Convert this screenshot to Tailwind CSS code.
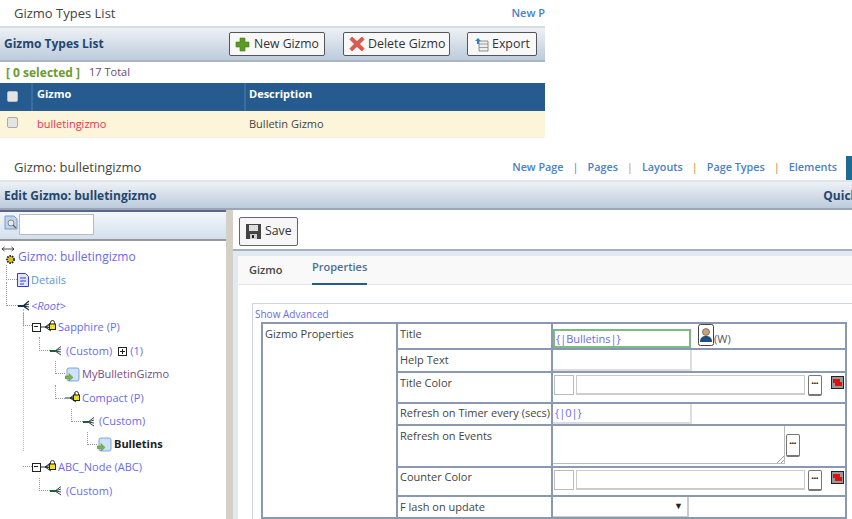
<!DOCTYPE html>
<html lang="en">
<head>
<meta charset="UTF-8">
<script src="https://cdn.jsdelivr.net/npm/@tailwindcss/browser@4"></script>
<title>Gizmo Types</title>
</head>
<body class="bg-white font-['Open_Sans',sans-serif] text-[11px] text-[#444] overflow-hidden h-[519px] w-[852px]">

<!-- Gizmo types list -->
<section class="w-[545px]">
  <div class="h-[26px] flex items-center justify-between pl-[14px] pt-[1px] overflow-hidden">
    <span class="text-[13px] text-[#444]">Gizmo Types List</span>
    <span class="font-semibold text-[#4a80c8] whitespace-nowrap">New P</span>
  </div>
  <div class="h-[36px] border-t-2 border-b-2 border-t-[#d5dfe3] border-b-[#aab6c4] bg-gradient-to-b from-[#eef1f5] to-[#bccbdc] flex items-center pl-[4px]">
    <span class="font-bold text-[12px] text-[#24476e] w-[225px]">Gizmo Types List</span>
    <button class="h-[24px] w-[96px] border border-[#555] rounded-[2px] bg-[#f8f8f8] flex items-center pl-[5px] gap-[4px] text-[12.200px] text-[#333]">
      <svg class="w-[15px] h-[15px]" viewBox="0 0 15 15"><path d="M5 1h5v4h4v5h-4v4H5v-4H1V5h4z" fill="#5c9a26" stroke="#3f7a18" stroke-width=".6"/></svg>
      New Gizmo
    </button>
    <button class="ml-[18px] h-[24px] w-[107px] border border-[#555] rounded-[2px] bg-[#f8f8f8] flex items-center pl-[5px] gap-[3px] text-[12.400px] text-[#333]">
      <svg class="w-[16px] h-[16px]" viewBox="0 0 16 16"><path d="M3 1l5 4.500L13 1l2 2.500L10.500 8 15 12.500 13 15l-5-4.500L3 15l-2-2.500L5.500 8 1 3.500z" fill="#e0584c" stroke="#b03a30" stroke-width=".6"/></svg>
      Delete Gizmo
    </button>
    <button class="ml-[17px] h-[24px] w-[70px] border border-[#555] rounded-[2px] bg-[#f8f8f8] flex items-center pl-[6px] gap-[3px] text-[12.400px] text-[#333]">
      <svg class="w-[15px] h-[15px]" viewBox="0 0 15 15"><path d="M5 4h9v10H5z" fill="#eee" stroke="#777" stroke-width=".8"/><path d="M5 7h9M5 10.500h9" stroke="#888" stroke-width=".8"/><path d="M4 1l3 3H5v3H3V4H1z" fill="#2f7fd0"/></svg>
      Export
    </button>
  </div>
  <div class="h-[21px] flex items-center pl-[6px] gap-[9px]">
    <span class="font-bold text-[12px] text-[#6b9a2d]">[ 0 selected ]</span>
    <span class="text-[#6b4a72]">17 Total</span>
  </div>
  <div class="h-[28px] bg-[#265b8f] flex text-white font-bold">
    <div class="w-[33px] border-r-2 border-[#3d6d9c] pl-[7px] pt-[8px]"><span class="block w-[11px] h-[11px] bg-[#e4e4e4] border border-[#bbb] rounded-[2px]"></span></div>
    <div class="w-[213px] border-r-2 border-[#3d6d9c] pl-[4px] pt-[3px]">Gizmo</div>
    <div class="pl-[3px] pt-[3px]">Description</div>
  </div>
  <div class="h-[27px] bg-[#fdf5da] flex items-center border-b border-[#f4efe0]">
    <div class="w-[33px] pl-[7px] pb-[3px]"><span class="block w-[11px] h-[11px] bg-[#e4e4e4] border border-[#aaa] rounded-[2px]"></span></div>
    <div class="w-[213px] pl-[4px] text-[#f0304f]">bulletingizmo</div>
    <div class="pl-[3px]">Bulletin Gizmo</div>
  </div>
</section>

<!-- Edit gizmo -->
<div class="mt-[18px] h-[24px] flex items-center pl-[14px] relative">
  <span class="text-[13px] flex-1">Gizmo: bulletingizmo</span>
  <nav class="flex items-center font-semibold text-[10.800px] text-[#4a80c8] pb-[1px]">
    <span>New Page</span><span class="w-[24px] text-center font-normal text-[#4a80c8]">|</span>
    <span>Pages</span><span class="w-[24px] text-center font-normal text-[#d08a30]">|</span>
    <span>Layouts</span><span class="w-[24px] text-center font-normal text-[#d08a30]">|</span>
    <span>Page Types</span><span class="w-[24px] text-center font-normal text-[#d08a30]">|</span>
    <span>Elements</span>
    <span class="ml-[9px] w-[6px] h-[24px] bg-[#1d6b93]"></span>
  </nav>
</div>
<div class="h-[30px] border-t-2 border-b-2 border-t-[#e0e4e8] border-b-[#9aa6b6] bg-gradient-to-b from-[#eef1f5] to-[#bccbdc] flex items-center justify-between pl-[4px] pt-[1px] overflow-hidden">
  <span class="font-bold text-[12px] text-[#24476e]">Edit Gizmo: bulletingizmo</span>
  <span class="font-bold text-[12px] text-[#24476e] whitespace-nowrap -mr-[6px]">Quick</span>
</div>

<div class="flex h-[309px]">
  <!-- Tree -->
  <aside class="w-[226px] shrink-0">
    <div class="h-[31px] border-t-2 border-t-[#5d6588] border-b-2 border-b-[#999] bg-gradient-to-b from-[#f3f6f9] to-[#d2e0ee] flex items-start pt-[2px] pl-[4px] gap-[1px]">
      <svg class="w-[14px] h-[15px] mt-[1px]" viewBox="0 0 14 15"><path d="M1 1h9l3 3v10H1z" fill="#bcd4ee" stroke="#7a9cc4"/><circle cx="7" cy="8" r="3" fill="#e8e8e8" stroke="#888"/><path d="M9 10l3 3" stroke="#666" stroke-width="1.500"/></svg>
      <input class="w-[75px] h-[21px] bg-white border border-[#bbb]">
    </div>
    <div class="relative pt-[4px] text-[#6a6af0]">
      <svg class="absolute left-[1px] top-[5px] w-[14px] h-[6px]" viewBox="0 0 14 6"><path d="M1 3h12M1 3l2.500-2M1 3l2.500 2M13 3l-2.500-2M13 3l-2.500 2" stroke="#222" stroke-width=".8" fill="none"/></svg>
      <!-- root -->
      <div class="h-[24px] flex items-center pl-[5px]">
        <svg class="w-[11px] h-[11px] mt-[4px]" viewBox="0 0 11 11"><circle cx="5.500" cy="5.500" r="3.500" fill="#d8c020" stroke="#222" stroke-width="1.800" stroke-dasharray="1.500 1"/></svg>
        <span class="text-[12px] ml-[2px]">Gizmo: bulletingizmo</span>
      </div>
      <!-- Details -->
      <div class="h-[24px] relative flex items-center pl-[17px] pb-[2px]">
        <span class="absolute left-[6px] top-[-4px] h-[15px] w-[11px] border-l border-b border-dotted border-[#999]"></span>
        <svg class="w-[12px] h-[14px]" viewBox="0 0 12 14"><path d="M.5.500h8l3 3v10H.5z" fill="#dde6fa" stroke="#3a3ad0"/><path d="M3 5h6M3 8h6M3 11h4" stroke="#3a3ad0"/></svg>
        <span class="ml-[2px] text-[#5b96d8]">Details</span>
      </div>
      <!-- Root -->
      <div class="h-[24px] relative flex items-center pl-[18px] pt-[2px]">
        <span class="absolute left-[6px] top-[-11px] h-[24px] w-[12px] border-l border-b border-dotted border-[#999]"></span>
        <svg class="w-[12px] h-[12px]" viewBox="0 0 12 12"><path d="M0 6h5" stroke="#134" stroke-width="2"/><path d="M5 6l6-5M5 6l6-2M5 6h0M5 6l6 1M5 6l6 4" stroke="#134" stroke-width="1.200"/></svg>
        <span class="ml-[1px] italic">&lt;Root&gt;</span>
      </div>
      <!-- Sapphire -->
      <div class="h-[22px] relative flex items-center pl-[32px] pb-[2px]">
        <span class="absolute left-[23px] top-[-4px] h-[13px] w-[9px] border-l border-b border-dotted border-[#999]"></span>
        <span class="w-[9px] h-[9px] border-[1.500px] border-[#222] bg-white relative"><span class="absolute left-[1px] top-[2px] w-[4px] h-[1.500px] bg-[#222]"></span></span>
        <svg class="w-[11px] h-[12px]" viewBox="0 0 11 12"><path d="M0 6h4M4 6l6-4.500M4 6l6-2M4 6l6 1M4 6l6 4" stroke="#234" stroke-width="1"/></svg>
        <svg class="w-[7px] h-[10px] -ml-[3px] -mt-[5px]" viewBox="0 0 7 10"><path d="M1.500 4V2.500a2 2 0 0 1 4 0V4" stroke="#333" fill="none"/><rect x=".5" y="4" width="6" height="5.500" fill="#f0e020" stroke="#222"/></svg>
        <span class="ml-[2px]">Sapphire (P)</span>
      </div>
      <!-- Custom -->
      <div class="h-[24px] relative flex items-center pl-[50px]">
        <span class="absolute left-[39px] top-[-2px] h-[14px] w-[11px] border-l border-b border-dotted border-[#999]"></span>
        <svg class="w-[12px] h-[12px]" viewBox="0 0 12 12"><path d="M0 6h5" stroke="#163" stroke-width="2"/><path d="M5 6l6-4.500M5 6l6-2M5 6l6 1M5 6l6 4" stroke="#345"/></svg>
        <span class="ml-[4px]">(Custom)</span>
        <span class="ml-[6px] w-[9px] h-[9px] border border-[#222] relative"><span class="absolute left-[1px] top-[3px] w-[5px] h-[1px] bg-[#222]"></span><span class="absolute left-[3px] top-[1px] w-[1px] h-[5px] bg-[#222]"></span></span>
        <span class="ml-[3px]">(1)</span>
      </div>
      <!-- MyBulletinGizmo -->
      <div class="h-[23px] relative flex items-center pl-[65px]">
        <span class="absolute left-[55px] top-[-2px] h-[13px] w-[10px] border-l border-b border-dotted border-[#999]"></span>
        <svg class="w-[15px] h-[15px]" viewBox="0 0 15 15"><rect x="2" y="1" width="12" height="13" rx="2" fill="#cfe2fa" stroke="#7aa6dc"/><path d="M0 9h4V6.500L8 10.500 4 14v-2.500H0z" fill="#7ab648" stroke="#4c8a28" stroke-width=".5"/></svg>
        <span class="ml-[2px] text-[#7a4a8a]">MyBulletinGizmo</span>
      </div>
      <!-- Compact -->
      <div class="h-[24px] relative flex items-center pl-[65px]">
        <span class="absolute left-[55px] top-[-1px] h-[14px] w-[10px] border-l border-b border-dotted border-[#999]"></span>
        <svg class="w-[12px] h-[12px]" viewBox="0 0 12 12"><path d="M0 6h5M5 6l6-4.500M5 6l6-2M5 6l6 1M5 6l6 4" stroke="#234" stroke-width="1"/></svg>
        <svg class="w-[7px] h-[10px] -ml-[4px] -mt-[5px]" viewBox="0 0 7 10"><path d="M1.500 4V2.500a2 2 0 0 1 4 0V4" stroke="#333" fill="none"/><rect x=".5" y="4" width="6" height="5.500" fill="#f0e020" stroke="#222"/></svg>
        <span class="ml-[2px]">Compact (P)</span>
      </div>
      <!-- Custom -->
      <div class="h-[23px] relative flex items-center pl-[83px]">
        <span class="absolute left-[71px] top-[-1px] h-[13px] w-[12px] border-l border-b border-dotted border-[#999]"></span>
        <svg class="w-[12px] h-[12px]" viewBox="0 0 12 12"><path d="M0 6h5" stroke="#163" stroke-width="2"/><path d="M5 6l6-4.500M5 6l6-2M5 6l6 1M5 6l6 4" stroke="#345"/></svg>
        <span class="ml-[4px]">(Custom)</span>
      </div>
      <!-- Bulletins -->
      <div class="h-[23px] relative flex items-center pl-[97px]">
        <span class="absolute left-[87px] top-[-1px] h-[13px] w-[10px] border-l border-b border-dotted border-[#999]"></span>
        <svg class="w-[15px] h-[15px]" viewBox="0 0 15 15"><rect x="2" y="1" width="12" height="13" rx="2" fill="#cfe2fa" stroke="#7aa6dc"/><path d="M0 9h4V6.500L8 10.500 4 14v-2.500H0z" fill="#7ab648" stroke="#4c8a28" stroke-width=".5"/></svg>
        <span class="ml-[2px] font-bold text-[#222]">Bulletins</span>
      </div>
      <!-- ABC_Node -->
      <div class="h-[24px] relative flex items-center pl-[32px] pb-[2px]">
        <span class="absolute left-[23px] top-[-1px] h-[12px] w-[9px] border-b border-dotted border-[#999]"></span>
        <span class="w-[9px] h-[9px] border-[1.500px] border-[#222] bg-white relative"><span class="absolute left-[1px] top-[2px] w-[4px] h-[1.500px] bg-[#222]"></span></span>
        <svg class="w-[11px] h-[12px]" viewBox="0 0 11 12"><path d="M0 6h4M4 6l6-4.500M4 6l6-2M4 6l6 1M4 6l6 4" stroke="#234" stroke-width="1"/></svg>
        <svg class="w-[7px] h-[10px] -ml-[3px] -mt-[5px]" viewBox="0 0 7 10"><path d="M1.500 4V2.500a2 2 0 0 1 4 0V4" stroke="#333" fill="none"/><rect x=".5" y="4" width="6" height="5.500" fill="#f0e020" stroke="#222"/></svg>
        <span class="ml-[2px]">ABC_Node (ABC)</span>
      </div>
      <!-- Custom -->
      <div class="h-[24px] relative flex items-center pl-[50px] pb-[2px]">
        <span class="absolute left-[39px] top-[-2px] h-[13px] w-[11px] border-l border-b border-dotted border-[#999]"></span>
        <svg class="w-[12px] h-[12px]" viewBox="0 0 12 12"><path d="M0 6h5" stroke="#163" stroke-width="2"/><path d="M5 6l6-4.500M5 6l6-2M5 6l6 1M5 6l6 4" stroke="#345"/></svg>
        <span class="ml-[4px]">(Custom)</span>
      </div>
      <span class="absolute left-[23px] top-[68px] h-[142px] border-l border-dotted border-[#bbb]"></span>
    </div>
  </aside>
  <div class="w-[7px] shrink-0 bg-[#d4d0c8]"></div>

  <!-- Editor -->
  <main class="flex-1 min-w-0">
    <div class="h-[41px] border-b-2 border-b-[#a5b1c2] pl-[6px] pt-[7px]">
      <button class="h-[29px] w-[59px] border border-[#666] rounded-[2px] bg-[#f6f6f6] flex items-center pl-[5px] gap-[3px] text-[12.300px] text-[#333]">
        <svg class="w-[17px] h-[17px]" viewBox="0 0 17 17"><path d="M1 1h15v15H1z" fill="#444"/><rect x="4" y="2" width="9" height="6" fill="#ddd"/><rect x="5" y="11" width="7" height="5" fill="#ccc"/><rect x="7" y="12" width="2" height="3" fill="#222"/></svg>
        Save
      </button>
    </div>
    <div class="bg-[#e3e9f1] pl-[5px] pt-[5px] h-[268px]">
      <div class="bg-white h-full">
        <div class="h-[29px] bg-[#f9f9f9] border-b border-[#e4e4e4] flex pl-[11px]">
          <span class="w-[63px] pt-[6px] font-semibold text-[#444]">Gizmo</span>
          <span class="h-[29px] pt-[3px] border-b-2 border-[#265b8f] font-semibold text-[#4d6f96]">Properties</span>
        </div>
        <div class="pl-[14px] pt-[18px]">
          <div class="border-t border-l border-[#cdd6e6] pl-[2px] pt-[3px] h-[230px]">
            <div class="text-[10px] text-[#6a6af0] h-[15px] leading-[15px]">Show Advanced</div>
            <div class="ml-[6px] w-[586px] border-2 border-[#8a99b2] flex h-[197px]">
              <div class="w-[135px] border-r-2 border-[#8a99b2] pl-[2px] pt-[2px]">Gizmo Properties</div>
              <div class="flex-1">
                <div class="h-[26px] flex border-b-2 border-[#8a99b2]">
                  <div class="w-[155px] border-r-2 border-[#8a99b2] pl-[2px] pt-[2px]">Title</div>
                  <div class="flex-1 flex items-start pt-[5px] relative">
                    <div class="w-[138px] h-[19px] border-2 border-[#7fb97f] pl-[1px] text-[#6a6af0] leading-[16px]">{|Bulletins|}</div>
                    <svg class="ml-[7px] -mt-[5px] w-[16px] h-[22px]" viewBox="0 0 16 22"><rect x=".5" y=".5" width="15" height="21" rx="2" fill="#fff" stroke="#444"/><circle cx="8" cy="8" r="3.500" fill="#c9a27a" stroke="#444" stroke-width=".6"/><path d="M2 18c0-5 3-6 6-6s6 1 6 6z" fill="#1e4f80"/></svg>
                    <span class="text-[#555] mt-[2px]">(W)</span>
                  </div>
                </div>
                <div class="h-[23px] flex border-b-2 border-[#8a99b2]">
                  <div class="w-[155px] border-r-2 border-[#8a99b2] pl-[2px] pt-[2px]">Help Text</div>
                  <div class="flex-1"><div class="w-[139px] h-[21px] border-r-2 border-b-2 border-[#ddd]"></div></div>
                </div>
                <div class="h-[31px] flex border-b-2 border-[#8a99b2]">
                  <div class="w-[155px] border-r-2 border-[#8a99b2] pl-[2px] pt-[2px]">Title Color</div>
                  <div class="flex-1 flex items-start pt-[2px] pl-[1px]">
                    <div class="w-[20px] h-[20px] border border-[#bbb]"></div>
                    <div class="ml-[2px] w-[229px] h-[20px] border border-[#ccc] border-b-2"></div>
                    <div class="ml-[3px] w-[14px] h-[21px] border border-[#777] rounded-[2px] border-b-2 text-center text-[6px] leading-[14px] font-bold text-[#222]">•••</div>
                    <svg class="ml-[9px] mt-[1px] w-[13px] h-[13px]" viewBox="0 0 13 13"><rect x=".5" y=".5" width="12" height="12" fill="#999" stroke="#222"/><path d="M2 3h7v3h2v4H4V7H2z" fill="#e01010"/></svg>
                  </div>
                </div>
                <div class="h-[22px] flex border-b-2 border-[#8a99b2]">
                  <div class="w-[155px] border-r-2 border-[#8a99b2] pl-[2px] pt-[1px] whitespace-nowrap">Refresh on Timer every (secs)</div>
                  <div class="flex-1"><div class="w-[139px] h-[20px] border-r-2 border-b-2 border-[#ddd] pl-[2px] text-[#6a6af0] leading-[18px]">{|0|}</div></div>
                </div>
                <div class="h-[42px] flex border-b-2 border-[#8a99b2]">
                  <div class="w-[155px] border-r-2 border-[#8a99b2] pl-[2px] pt-[2px]">Refresh on Events</div>
                  <div class="flex-1 flex items-start">
                    <div class="w-[232px] h-[38px] border-r border-b border-[#bbb] bg-white relative">
                      <svg class="absolute right-0 bottom-0 w-[7px] h-[7px]" viewBox="0 0 7 7"><path d="M7 0L0 7M7 4L4 7" stroke="#999"/></svg>
                    </div>
                    <div class="ml-[1px] mt-[8px] w-[14px] h-[23px] border border-[#777] rounded-[2px] border-b-2 text-center text-[6px] leading-[16px] font-bold text-[#222]">•••</div>
                  </div>
                </div>
                <div class="h-[29px] flex border-b-2 border-[#8a99b2]">
                  <div class="w-[155px] border-r-2 border-[#8a99b2] pl-[2px] pt-[1px]">Counter Color</div>
                  <div class="flex-1 flex items-start pt-[2px] pl-[1px]">
                    <div class="w-[20px] h-[20px] border border-[#bbb]"></div>
                    <div class="ml-[2px] w-[229px] h-[20px] border border-[#ccc] border-b-2"></div>
                    <div class="ml-[3px] w-[14px] h-[21px] border border-[#777] rounded-[2px] border-b-2 text-center text-[6px] leading-[14px] font-bold text-[#222]">•••</div>
                    <svg class="ml-[9px] mt-[1px] w-[13px] h-[13px]" viewBox="0 0 13 13"><rect x=".5" y=".5" width="12" height="12" fill="#999" stroke="#222"/><path d="M2 3h7v3h2v4H4V7H2z" fill="#e01010"/></svg>
                  </div>
                </div>
                <div class="h-[20px] flex">
                  <div class="w-[155px] border-r-2 border-[#8a99b2] pl-[2px] pt-[2px]">F lash on update</div>
                  <div class="flex-1">
                    <div class="w-[136px] h-[20px] border-r-2 border-b border-[#ccc] relative"><span class="absolute right-[4px] top-[2px] text-[9px] text-[#222]">▼</span></div>
                  </div>
                </div>
              </div>
            </div>
          </div>
        </div>
      </div>
    </div>
  </main>
</div>
</body>
</html>
